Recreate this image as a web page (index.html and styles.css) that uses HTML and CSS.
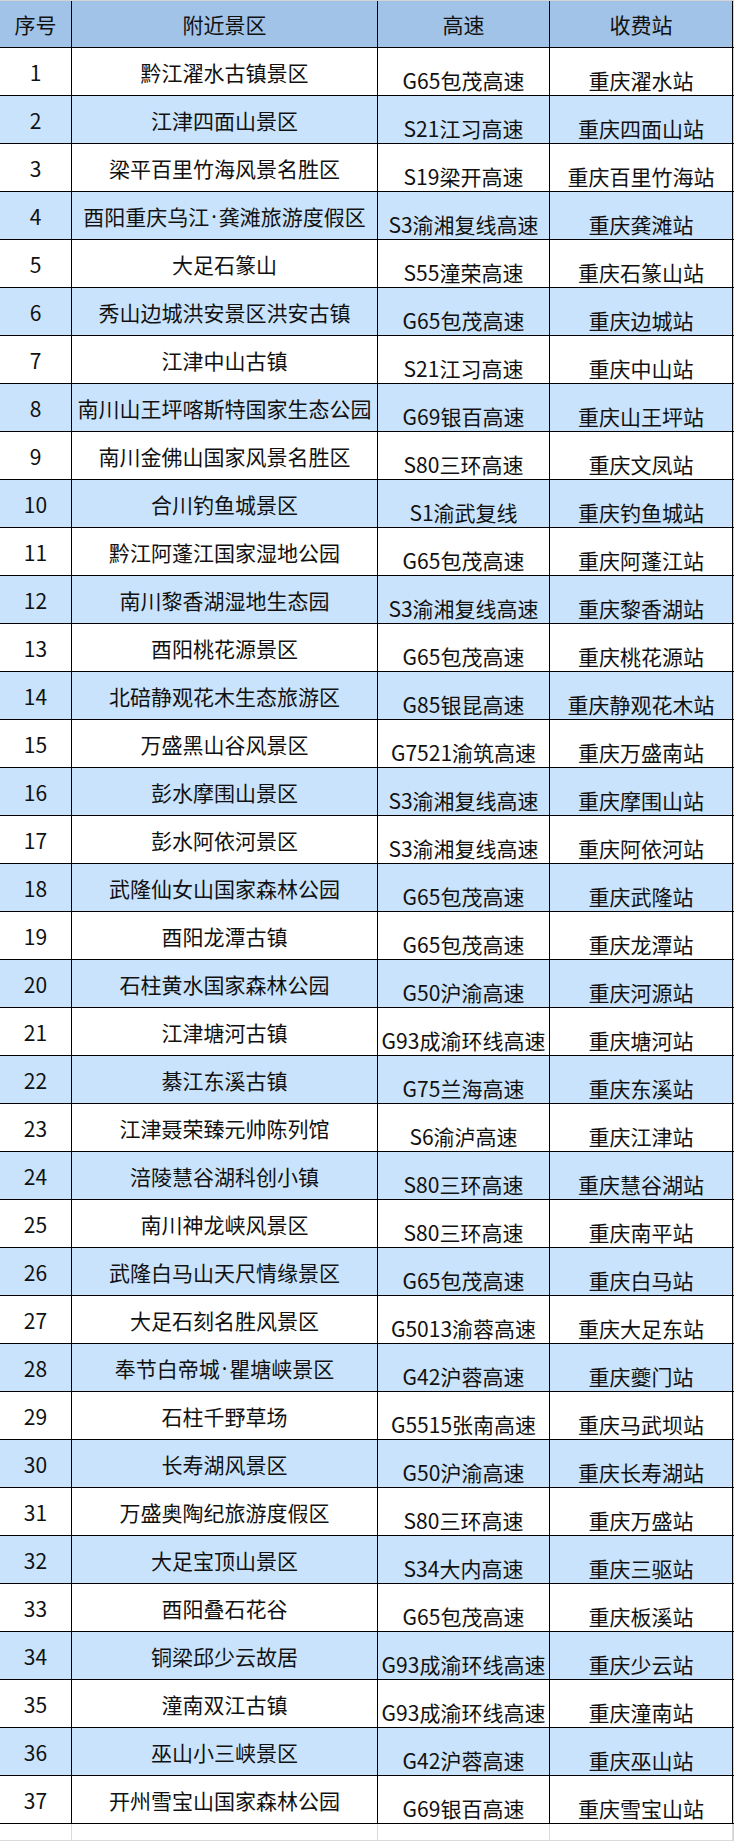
FILE: index.html
```html
<!DOCTYPE html>
<html lang="zh-CN">
<head>
<meta charset="utf-8">
<title>景区收费站</title>
<link rel="stylesheet" href="styles.css">
</head>
<body>
<div class="sheet">
  <div class="row head">
    <div class="cell c1">序号</div><div class="cell c2">附近景区</div><div class="cell c3">高速</div><div class="cell c4">收费站</div>
  </div>
  <div class="row"><div class="cell c1">1</div><div class="cell c2">黔江濯水古镇景区</div><div class="cell c3 low">G65包茂高速</div><div class="cell c4 low">重庆濯水站</div></div>
  <div class="row alt"><div class="cell c1">2</div><div class="cell c2">江津四面山景区</div><div class="cell c3 low">S21江习高速</div><div class="cell c4 low">重庆四面山站</div></div>
  <div class="row"><div class="cell c1">3</div><div class="cell c2">梁平百里竹海风景名胜区</div><div class="cell c3 low">S19梁开高速</div><div class="cell c4 low">重庆百里竹海站</div></div>
  <div class="row alt"><div class="cell c1">4</div><div class="cell c2">酉阳重庆乌江<span class="dot">·</span>龚滩旅游度假区</div><div class="cell c3 low">S3渝湘复线高速</div><div class="cell c4 low">重庆龚滩站</div></div>
  <div class="row"><div class="cell c1">5</div><div class="cell c2">大足石篆山</div><div class="cell c3 low">S55潼荣高速</div><div class="cell c4 low">重庆石篆山站</div></div>
  <div class="row alt"><div class="cell c1">6</div><div class="cell c2">秀山边城洪安景区洪安古镇</div><div class="cell c3 low">G65包茂高速</div><div class="cell c4 low">重庆边城站</div></div>
  <div class="row"><div class="cell c1">7</div><div class="cell c2">江津中山古镇</div><div class="cell c3 low">S21江习高速</div><div class="cell c4 low">重庆中山站</div></div>
  <div class="row alt"><div class="cell c1">8</div><div class="cell c2">南川山王坪喀斯特国家生态公园</div><div class="cell c3 low">G69银百高速</div><div class="cell c4 low">重庆山王坪站</div></div>
  <div class="row"><div class="cell c1">9</div><div class="cell c2">南川金佛山国家风景名胜区</div><div class="cell c3 low">S80三环高速</div><div class="cell c4 low">重庆文凤站</div></div>
  <div class="row alt"><div class="cell c1">10</div><div class="cell c2">合川钓鱼城景区</div><div class="cell c3 low">S1渝武复线</div><div class="cell c4 low">重庆钓鱼城站</div></div>
  <div class="row"><div class="cell c1">11</div><div class="cell c2">黔江阿蓬江国家湿地公园</div><div class="cell c3 low">G65包茂高速</div><div class="cell c4 low">重庆阿蓬江站</div></div>
  <div class="row alt"><div class="cell c1">12</div><div class="cell c2">南川黎香湖湿地生态园</div><div class="cell c3 low">S3渝湘复线高速</div><div class="cell c4 low">重庆黎香湖站</div></div>
  <div class="row"><div class="cell c1">13</div><div class="cell c2">酉阳桃花源景区</div><div class="cell c3 low">G65包茂高速</div><div class="cell c4 low">重庆桃花源站</div></div>
  <div class="row alt"><div class="cell c1">14</div><div class="cell c2">北碚静观花木生态旅游区</div><div class="cell c3 low">G85银昆高速</div><div class="cell c4 low">重庆静观花木站</div></div>
  <div class="row"><div class="cell c1">15</div><div class="cell c2">万盛黑山谷风景区</div><div class="cell c3 low">G7521渝筑高速</div><div class="cell c4 low">重庆万盛南站</div></div>
  <div class="row alt"><div class="cell c1">16</div><div class="cell c2">彭水摩围山景区</div><div class="cell c3 low">S3渝湘复线高速</div><div class="cell c4 low">重庆摩围山站</div></div>
  <div class="row"><div class="cell c1">17</div><div class="cell c2">彭水阿依河景区</div><div class="cell c3 low">S3渝湘复线高速</div><div class="cell c4 low">重庆阿依河站</div></div>
  <div class="row alt"><div class="cell c1">18</div><div class="cell c2">武隆仙女山国家森林公园</div><div class="cell c3 low">G65包茂高速</div><div class="cell c4 low">重庆武隆站</div></div>
  <div class="row"><div class="cell c1">19</div><div class="cell c2">酉阳龙潭古镇</div><div class="cell c3 low">G65包茂高速</div><div class="cell c4 low">重庆龙潭站</div></div>
  <div class="row alt"><div class="cell c1">20</div><div class="cell c2">石柱黄水国家森林公园</div><div class="cell c3 low">G50沪渝高速</div><div class="cell c4 low">重庆河源站</div></div>
  <div class="row"><div class="cell c1">21</div><div class="cell c2">江津塘河古镇</div><div class="cell c3 low">G93成渝环线高速</div><div class="cell c4 low">重庆塘河站</div></div>
  <div class="row alt"><div class="cell c1">22</div><div class="cell c2">綦江东溪古镇</div><div class="cell c3 low">G75兰海高速</div><div class="cell c4 low">重庆东溪站</div></div>
  <div class="row"><div class="cell c1">23</div><div class="cell c2">江津聂荣臻元帅陈列馆</div><div class="cell c3 low">S6渝泸高速</div><div class="cell c4 low">重庆江津站</div></div>
  <div class="row alt"><div class="cell c1">24</div><div class="cell c2">涪陵慧谷湖科创小镇</div><div class="cell c3 low">S80三环高速</div><div class="cell c4 low">重庆慧谷湖站</div></div>
  <div class="row"><div class="cell c1">25</div><div class="cell c2">南川神龙峡风景区</div><div class="cell c3 low">S80三环高速</div><div class="cell c4 low">重庆南平站</div></div>
  <div class="row alt"><div class="cell c1">26</div><div class="cell c2">武隆白马山天尺情缘景区</div><div class="cell c3 low">G65包茂高速</div><div class="cell c4 low">重庆白马站</div></div>
  <div class="row"><div class="cell c1">27</div><div class="cell c2">大足石刻名胜风景区</div><div class="cell c3 low">G5013渝蓉高速</div><div class="cell c4 low">重庆大足东站</div></div>
  <div class="row alt"><div class="cell c1">28</div><div class="cell c2">奉节白帝城<span class="dot">·</span>瞿塘峡景区</div><div class="cell c3 low">G42沪蓉高速</div><div class="cell c4 low">重庆夔门站</div></div>
  <div class="row"><div class="cell c1">29</div><div class="cell c2">石柱千野草场</div><div class="cell c3 low">G5515张南高速</div><div class="cell c4 low">重庆马武坝站</div></div>
  <div class="row alt"><div class="cell c1">30</div><div class="cell c2">长寿湖风景区</div><div class="cell c3 low">G50沪渝高速</div><div class="cell c4 low">重庆长寿湖站</div></div>
  <div class="row"><div class="cell c1">31</div><div class="cell c2">万盛奥陶纪旅游度假区</div><div class="cell c3 low">S80三环高速</div><div class="cell c4 low">重庆万盛站</div></div>
  <div class="row alt"><div class="cell c1">32</div><div class="cell c2">大足宝顶山景区</div><div class="cell c3 low">S34大内高速</div><div class="cell c4 low">重庆三驱站</div></div>
  <div class="row"><div class="cell c1">33</div><div class="cell c2">酉阳叠石花谷</div><div class="cell c3 low">G65包茂高速</div><div class="cell c4 low">重庆板溪站</div></div>
  <div class="row alt"><div class="cell c1">34</div><div class="cell c2">铜梁邱少云故居</div><div class="cell c3 low">G93成渝环线高速</div><div class="cell c4 low">重庆少云站</div></div>
  <div class="row"><div class="cell c1">35</div><div class="cell c2">潼南双江古镇</div><div class="cell c3 low">G93成渝环线高速</div><div class="cell c4 low">重庆潼南站</div></div>
  <div class="row alt"><div class="cell c1">36</div><div class="cell c2">巫山小三峡景区</div><div class="cell c3 low">G42沪蓉高速</div><div class="cell c4 low">重庆巫山站</div></div>
  <div class="row"><div class="cell c1">37</div><div class="cell c2">开州雪宝山国家森林公园</div><div class="cell c3 low">G69银百高速</div><div class="cell c4 low">重庆雪宝山站</div></div>
  <div class="row empty"><div class="cell c1"></div><div class="cell c2"></div><div class="cell c3"></div><div class="cell c4"></div></div>
</div>
</body>
</html>
```

FILE: styles.css
```css
html, body {
  margin: 0;
  padding: 0;
  background: #ffffff;
}

.sheet {
  width: 734px;
  font-family: "Noto Sans CJK SC", "Noto Sans", sans-serif;
  font-size: 21px;
  color: #111111;
  border-top: 1px solid #d4d4d4;
}

.row {
  display: grid;
  grid-template-columns: 72px 306px 172px 183px 1px;
  height: 48px;
  box-sizing: border-box;
  border-bottom: 1px solid #000000;
  background: #ffffff;
}

.row::after {
  content: "";
  background: #d4d4d4;
}

.row.head {
  height: 47px;
  background: #a1c3e7;
}

.row.alt {
  background: #cae3fc;
}

.cell {
  display: flex;
  align-items: center;
  justify-content: center;
  box-sizing: border-box;
  border-right: 1px solid #000000;
  white-space: nowrap;
  line-height: normal;
}

.cell.low {
  align-items: flex-end;
}

.dot {
  font-family: "Noto Sans", "Liberation Sans", sans-serif;
  padding: 0 2px;
}

.row.empty {
  height: 17px;
  border-bottom: 1px solid #dadada;
}

.row.empty .cell {
  border-right-color: #dadada;
}
```
